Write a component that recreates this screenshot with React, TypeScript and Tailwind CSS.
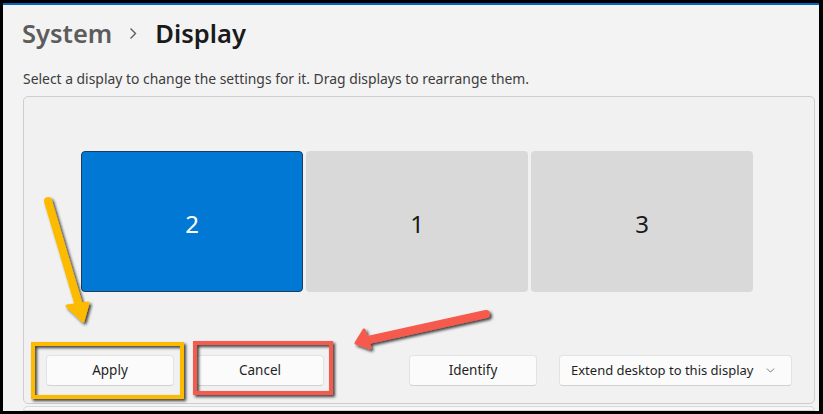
import { ChevronDown } from 'lucide-react';

const monitors = [
  { id: '2', active: true },
  { id: '1', active: false },
  { id: '3', active: false },
];

const btnBase =
  'flex h-[31px] items-center whitespace-nowrap rounded-[4px] border border-[#e3e3e3] border-b-[#d2d2d2] bg-[#fbfbfb] text-[13.5px] text-[#1f1f1f]';

function Btn({ children }: { children: React.ReactNode }) {
  return <button className={`${btnBase} w-[128px] justify-center`}>{children}</button>;
}

function Annotations() {
  return (
    <svg className="pointer-events-none absolute left-0 top-0" width="823" height="414" viewBox="0 0 823 414">
      <defs>
        <filter id="sh" x="-20%" y="-20%" width="140%" height="140%">
          <feDropShadow dx="2" dy="2" stdDeviation="1.4" floodColor="#000" floodOpacity="0.75" />
        </filter>
      </defs>
      <g filter="url(#sh)">
        <rect x="33" y="344" width="149" height="53" fill="none" stroke="#fdbb00" strokeWidth="4" />
        <rect x="195" y="343" width="136" height="50" fill="none" stroke="#f55a4e" strokeWidth="4" />
        <line x1="48" y1="201" x2="80" y2="309" stroke="#fdbb00" strokeWidth="8" strokeLinecap="round" />
        <polygon points="67,306 83,321 88,303" fill="#fdbb00" stroke="#fdbb00" strokeWidth="3" strokeLinejoin="round" />
        <line x1="486" y1="314" x2="368" y2="340" stroke="#f55a4e" strokeWidth="8" strokeLinecap="round" />
        <polygon points="364,330 356,343 370,348" fill="#f55a4e" stroke="#f55a4e" strokeWidth="3" strokeLinejoin="round" />
      </g>
    </svg>
  );
}

export default function App() {
  return (
    <div className="relative h-[414px] w-[823px] bg-black pb-[3px] pl-[3px] pr-[4px] pt-[3px] font-['Noto_Sans',sans-serif]">
      <div className="flex h-full flex-col overflow-hidden border-t-2 border-[#0067c0] bg-[#f3f3f3] pl-[20px] pr-[4px]">
        <h1 className="mt-[10px] flex items-center text-[25.5px] font-semibold leading-[36px]">
          <span className="-ml-[1px] text-[#5c5c5c]">System</span>
          <svg className="ml-[17px] mr-[18px]" width="8" height="13" viewBox="0 0 8 13">
            <path d="M1.5 1.5 L6.5 6.5 L1.5 11.5" fill="none" stroke="#5c5c5c" strokeWidth="1.4" />
          </svg>
          <span className="text-[#1a1a1a]">Display</span>
        </h1>
        <p className="mt-[18px] text-[13.9px] leading-[20px] text-[#3c3c3c]">
          Select a display to change the settings for it. Drag displays to rearrange them.
        </p>
        <div className="mt-[7px] flex flex-col rounded-[5px] border border-[#cdcdcd] bg-[#f1f1f1]">
          <div className="mt-[54px] flex justify-center gap-[3px] pr-[4px]">
            {monitors.map((m) => (
              <div
                key={m.id}
                className={
                  m.active
                    ? 'flex h-[141px] w-[222px] items-center justify-center rounded-[4px] border border-[#1c3d5e] bg-[#0078d4] pt-[5px] text-[24px] text-white'
                    : 'flex h-[141px] w-[222px] items-center justify-center rounded-[4px] bg-[#d9d9d9] pt-[5px] text-[24px] text-[#1a1a1a]'
                }
              >
                {m.id}
              </div>
            ))}
          </div>
          <div className="mb-[17px] mt-[63px] flex justify-between px-[22px]">
            <div className="flex gap-[22px]">
              <Btn>Apply</Btn>
              <Btn>Cancel</Btn>
            </div>
            <div className="flex gap-[22px]">
              <Btn>Identify</Btn>
              <button className={`${btnBase} w-[233px] gap-[4px] pl-[11px] pr-[14px]`}>
                <span className="text-[13px]">Extend desktop to this display</span>
                <ChevronDown size={13} strokeWidth={1.5} className="ml-auto text-[#5c5c5c]" />
              </button>
            </div>
          </div>
        </div>
        <div className="mt-[2px] h-[12px] rounded-t-[5px] border border-[#d8d8d8] bg-[#f8f8f8]" />
      </div>
      <Annotations />
    </div>
  );
}
